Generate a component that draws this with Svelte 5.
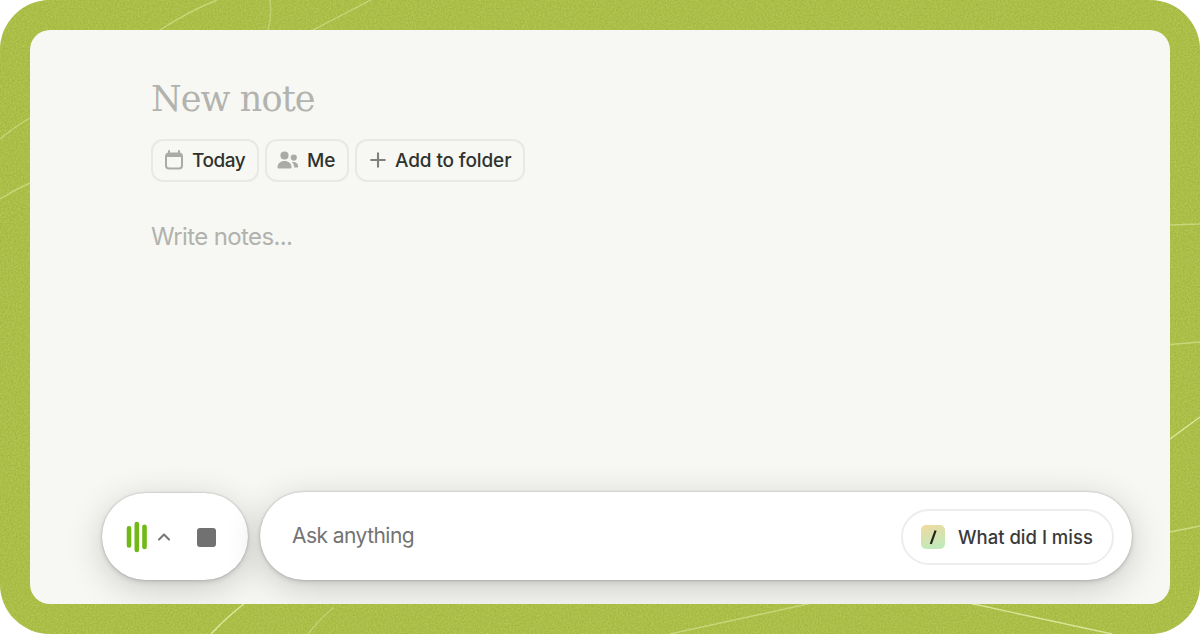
<script lang="ts">
  const lines = [
    { d: 'M0 139Q14 127 30 118', opacity: 0.5 },
    { d: 'M0 199Q14 190 30 183', opacity: 0.5 },
    { d: 'M160 30Q187 12 217 0', opacity: 0.5 },
    { d: 'M270 0Q272 16 268 31', opacity: 0.4 },
    { d: 'M313 30L371 0', opacity: 0.5 },
    { d: 'M1170 225L1200 224', opacity: 0.5 },
    { d: 'M1170 344.5L1200 342', opacity: 0.5 },
    { d: 'M1170 439L1200 417', opacity: 0.9 },
    { d: 'M1170 532L1200 526', opacity: 0.6 },
    { d: 'M211 634Q228 616 245 603', opacity: 0.9 },
    { d: 'M308 634Q319 620 334 607', opacity: 0.4 },
    { d: 'M670 634L812 603', opacity: 0.5 },
    { d: 'M969 603L1112 634', opacity: 0.8 },
  ];
</script>

<main class="frame">
  <svg class="backdrop" viewBox="0 0 1200 634" aria-hidden="true">
    <filter id="grain" x="0" y="0" width="100%" height="100%" color-interpolation-filters="sRGB">
      <feTurbulence type="fractalNoise" baseFrequency="0.6" numOctaves="2" seed="4" />
      <feColorMatrix values="0.3 0 0 0 0.52  0.3 0 0 0 0.6  0.3 0 0 0 0.14  0 0 0 0 1" />
    </filter>
    <rect width="1200" height="634" filter="url(#grain)" opacity="0.4" />
    {#each lines as line}
      <path d={line.d} fill="none" stroke="#e7edab" stroke-width="1.4" opacity={line.opacity} />
    {/each}
  </svg>

  <section class="note">
    <h1>New note</h1>
    <div class="chips">
      <button class="chip today">
        <svg width="20" height="22" viewBox="0 0 20 22" fill="none" stroke="#aaaba7">
          <rect x="2" y="4.5" width="16" height="15" rx="3" stroke-width="2" />
          <path d="M2 6.5h16" stroke-width="3" />
          <path d="M5 2v3.5M15 2v3.5" stroke-width="2" stroke-linecap="round" />
        </svg>
        <span>Today</span>
      </button>
      <button class="chip me">
        <svg width="22" height="20" viewBox="0 0 22 20" fill="#aaaba7">
          <circle cx="7.5" cy="5.5" r="4.1" />
          <circle cx="16.8" cy="7.6" r="3.1" />
          <path d="M.5 17.2c0-3.7 3-6.2 7-6.2s7 2.5 7 6.2c0 .8-.5 1.3-1.2 1.3H1.7c-.7 0-1.2-.5-1.2-1.3Z" />
          <path d="M14.8 12.2c3.7-.7 6.4 1.3 6.4 4.2 0 .6-.4 1-1 1h-3c0-2-.8-3.8-2.4-5.2Z" />
        </svg>
        <span>Me</span>
      </button>
      <button class="chip folder">
        <svg width="16" height="16" viewBox="0 0 16 16" fill="none" stroke="#80817e" stroke-width="2.1" stroke-linecap="round">
          <path d="M8 1.2v13.6M1.2 8h13.6" />
        </svg>
        <span>Add to folder</span>
      </button>
    </div>
    <p class="placeholder">Write notes...</p>

    <footer>
      <div class="recorder">
        <svg class="wave" width="22" height="32" viewBox="0 0 22 32" fill="none" stroke="#70b916" stroke-width="4.6" stroke-linecap="round">
          <path d="M3 7.3v17.2M10.8 3v26M18.5 5.8v20.2" />
        </svg>
        <svg class="chevron" width="14" height="10" viewBox="0 0 14 10" fill="none" stroke="#777" stroke-width="2.1" stroke-linecap="round" stroke-linejoin="round">
          <path d="M2 7.5 7 2.5l5 5" />
        </svg>
        <span class="stop"></span>
      </div>
      <div class="ask">
        <span class="prompt">Ask anything</span>
        <button class="recipe">
          <svg width="24" height="24" viewBox="0 0 24 24">
            <linearGradient id="slash-tile" x1="0" y1="0" x2="0.3" y2="1">
              <stop offset="0" stop-color="#f1d9a0" />
              <stop offset="1" stop-color="#c2e9b9" />
            </linearGradient>
            <rect width="24" height="24" rx="5" fill="url(#slash-tile)" />
            <path d="M9.8 19 14.6 5.5" stroke="#1f211d" stroke-width="2.2" />
          </svg>
          <span>What did I miss</span>
        </button>
      </div>
    </footer>
  </section>
</main>

<style>
  :global(body) {
    background: #fff;
  }

  .frame {
    position: relative;
    box-sizing: border-box;
    width: 1200px;
    height: 634px;
    padding: 30px;
    overflow: hidden;
    border-radius: 50px;
    background: #abbf49;
    font-family: Inter, 'Liberation Sans', sans-serif;
  }

  .backdrop {
    position: absolute;
    inset: 0;
  }

  .note {
    position: relative;
    display: flex;
    flex-direction: column;
    box-sizing: border-box;
    height: 574px;
    padding: 45px 38px 24px 72px;
    overflow: hidden;
    border-radius: 20px;
    background: #f7f8f3;
  }

  h1 {
    margin: 0 0 0 49px;
    color: #b2b3ae;
    font-family: 'DejaVu Serif', serif;
    font-size: 35px;
    font-weight: 400;
    letter-spacing: -0.9px;
    line-height: 48px;
  }

  .chips {
    display: flex;
    gap: 6px;
    margin: 16px 0 0 49px;
  }

  button {
    display: flex;
    align-items: center;
    box-sizing: border-box;
    margin: 0;
    font: inherit;
    white-space: nowrap;
  }

  .chip {
    height: 43px;
    padding: 0 0 1px 12px;
    border: 2px solid #e8e9e4;
    border-radius: 12px;
    background: transparent;
    color: #30322e;
    font-size: 19px;
    font-weight: 500;
    letter-spacing: -0.12px;
  }

  .today {
    width: 108px;
    padding-left: 11px;
    gap: 8px;
  }

  .me {
    width: 84px;
    padding-left: 10px;
    gap: 8px;
  }

  .folder {
    width: 170px;
    padding-left: 13px;
    gap: 9px;
  }

  .today span {
    letter-spacing: -0.45px;
  }

  .placeholder {
    margin: 39px 0 0 49px;
    color: #b1b2ae;
    font-size: 24px;
    letter-spacing: -0.62px;
    line-height: 32px;
  }

  footer {
    display: flex;
    align-items: flex-end;
    gap: 12px;
    margin-top: auto;
  }

  .recorder,
  .ask {
    display: flex;
    align-items: center;
    box-sizing: border-box;
    height: 88px;
    border-radius: 44px;
    background: #fff;
    box-shadow: 0 0 2px rgb(0 0 0 / 25%), 0 2px 5px rgb(0 0 0 / 12%), 0 8px 36px rgb(0 0 0 / 19%);
  }

  .recorder {
    width: 146px;
    height: 87px;
    padding: 1px 0 0 24px;
  }

  .chevron {
    margin-left: 9px;
  }

  .stop {
    width: 19px;
    height: 19px;
    margin-left: 26px;
    border-radius: 3px;
    background: #717171;
  }

  .ask {
    flex: 1;
    justify-content: space-between;
    padding: 2px 18px 0 32px;
  }

  .prompt {
    margin-bottom: 3px;
    color: #737373;
    font-size: 21px;
    letter-spacing: -0.55px;
  }

  .recipe {
    gap: 13px;
    width: 213px;
    height: 56px;
    padding: 0 0 1px 18px;
    border: 2px solid #ededeb;
    border-radius: 28px;
    background: #fff;
    color: #3a3a3a;
    font-size: 18.5px;
    font-weight: 500;
  }
</style>
